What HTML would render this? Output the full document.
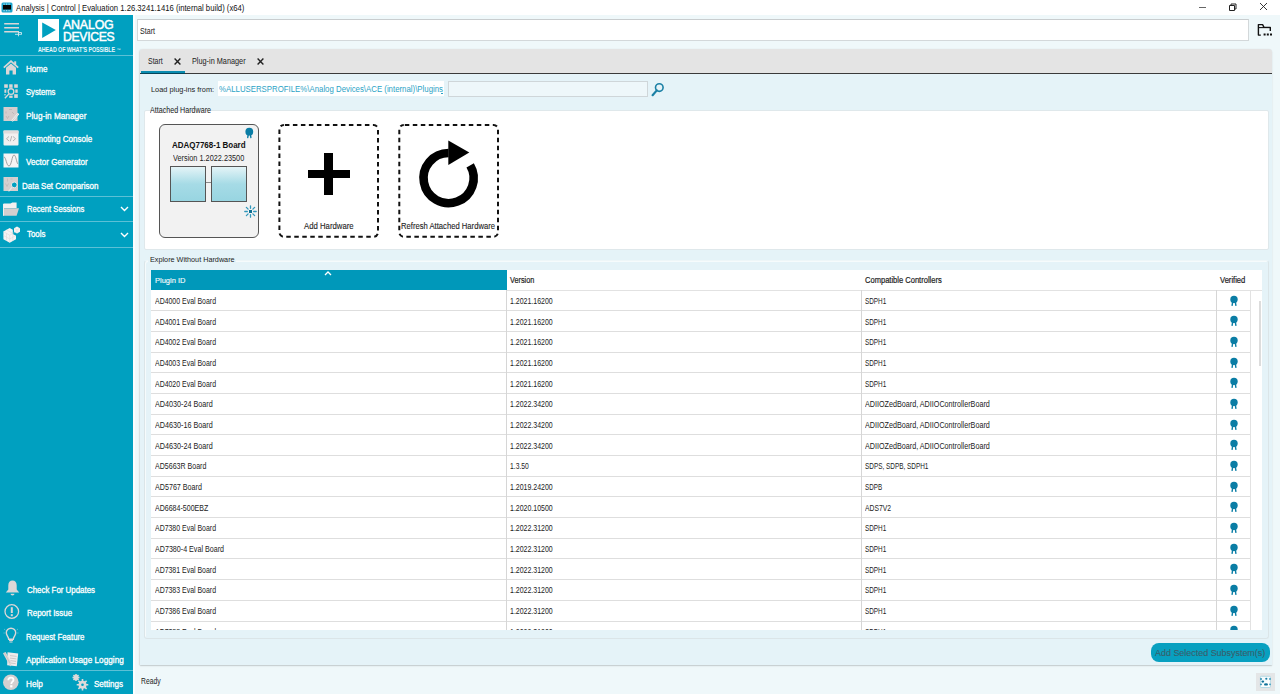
<!DOCTYPE html>
<html><head><meta charset="utf-8"><title>Analysis | Control | Evaluation</title>
<style>
html,body{margin:0;padding:0;width:1280px;height:694px;overflow:hidden;background:#fff}
body{position:relative;font-family:"Liberation Sans",sans-serif}
.b{position:absolute}
.t{position:absolute;white-space:nowrap;font-family:"Liberation Sans",sans-serif;transform-origin:0 50%}
</style></head><body>
<div class="b" style="left:0px;top:0px;width:1280px;height:15px;background:#fff"></div>
<svg class="b" style="left:1px;top:2px" width="12" height="11" viewBox="0 0 12 11">
<rect x="0.5" y="0.5" width="11" height="10" rx="1.5" fill="#1ea3cb"/>
<rect x="2" y="3" width="8" height="4.5" fill="#050505"/>
<rect x="2.5" y="1.6" width="1.2" height="1" fill="#bfe6f2"/><rect x="5" y="1.6" width="1.2" height="1" fill="#bfe6f2"/><rect x="7.5" y="1.6" width="1.2" height="1" fill="#bfe6f2"/>
<rect x="2.5" y="8.2" width="1.2" height="1" fill="#bfe6f2"/><rect x="5" y="8.2" width="1.2" height="1" fill="#bfe6f2"/><rect x="7.5" y="8.2" width="1.2" height="1" fill="#bfe6f2"/>
</svg>
<div class="t" style="left:16px;top:3px;font-size:9px;line-height:10px;font-weight:400;color:#111;letter-spacing:0px;transform:scaleX(0.8560);">Analysis | Control | Evaluation 1.26.3241.1416 (internal build) (x64)</div>
<div class="b" style="left:1199px;top:6.5px;width:7px;height:1px;background:#666"></div>
<svg class="b" style="left:1228px;top:2px" width="10" height="10" viewBox="0 0 10 10">
<path d="M1.5 3.5h5v5h-5z" fill="none" stroke="#222" stroke-width="1"/>
<path d="M3 3.5V2h5v5H6.5" fill="none" stroke="#222" stroke-width="1"/></svg>
<svg class="b" style="left:1259px;top:2px" width="9" height="9" viewBox="0 0 9 9">
<path d="M1 1L8 8M8 1L1 8" stroke="#222" stroke-width="0.9"/></svg>
<div class="b" style="left:133px;top:15px;width:1147px;height:679px;background:#eff8fa"></div>
<div class="b" style="left:133px;top:15px;width:2px;height:679px;background:#fbfdfe"></div>
<div class="b" style="left:0px;top:15px;width:133px;height:679px;background:#00a0c0"></div>
<div class="b" style="left:0px;top:55px;width:133px;height:1px;background:#5cc0d6"></div>
<div class="b" style="left:0px;top:196px;width:133px;height:1px;background:#5cc0d6"></div>
<div class="b" style="left:0px;top:221px;width:133px;height:1px;background:#5cc0d6"></div>
<div class="b" style="left:0px;top:247px;width:133px;height:1px;background:#5cc0d6"></div>
<div class="b" style="left:0px;top:670px;width:133px;height:1px;background:#5cc0d6"></div>
<svg class="b" style="left:3px;top:21px" width="20" height="16" viewBox="0 0 20 16">
<path d="M1.2 2.7h14.8M1.2 6.7h14.8M1.2 10.7h14.8" stroke="#dcd7d7" stroke-width="1.5"/>
<path d="M12 13.3h6.5M15.5 10.8v4.5M16 11.5h2.5v2" stroke="#cfe9ef" stroke-width="0.9" fill="none"/></svg>
<div class="b" style="left:38px;top:19px;width:21px;height:22px;background:#fff"></div>
<svg class="b" style="left:38px;top:19px" width="21" height="22" viewBox="0 0 21 22"><path d="M4.2 3.4L17.8 11L4.2 19z" fill="#00a0c0"/></svg>
<div class="t" style="left:63.3px;top:18px;font-size:12.4px;line-height:14px;font-weight:400;color:#fff;letter-spacing:-0.2px;-webkit-text-stroke:0.45px #fff;transform:scaleX(1.0029);">ANALOG</div>
<div class="t" style="left:63.3px;top:30px;font-size:12.4px;line-height:14px;font-weight:400;color:#fff;letter-spacing:-0.3px;-webkit-text-stroke:0.45px #fff;transform:scaleX(0.9829);">DEVICES</div>
<div class="t" style="left:37.8px;top:46px;font-size:6.8px;line-height:7px;font-weight:700;color:#e9f6fa;letter-spacing:-0.1px;transform:scaleX(0.7894);">AHEAD OF WHAT&#8217;S POSSIBLE</div>
<div class="t" style="left:116.5px;top:46.5px;font-size:4px;line-height:5px;font-weight:400;color:#e9f6fa;letter-spacing:0px;">&#8482;</div>
<div class="t" style="left:25.6px;top:64px;font-size:8.5px;line-height:10px;font-weight:400;color:#fff;letter-spacing:0px;-webkit-text-stroke:0.3px #fff;transform:scaleX(0.9521);">Home</div>
<div class="t" style="left:25.6px;top:87px;font-size:8.5px;line-height:10px;font-weight:400;color:#fff;letter-spacing:0px;-webkit-text-stroke:0.3px #fff;transform:scaleX(0.9020);">Systems</div>
<div class="t" style="left:25.6px;top:111px;font-size:8.5px;line-height:10px;font-weight:400;color:#fff;letter-spacing:0px;-webkit-text-stroke:0.3px #fff;transform:scaleX(0.9683);">Plug-in Manager</div>
<div class="t" style="left:25.6px;top:134px;font-size:8.5px;line-height:10px;font-weight:400;color:#fff;letter-spacing:0px;-webkit-text-stroke:0.3px #fff;transform:scaleX(0.9480);">Remoting Console</div>
<div class="t" style="left:25.6px;top:157px;font-size:8.5px;line-height:10px;font-weight:400;color:#fff;letter-spacing:0px;-webkit-text-stroke:0.3px #fff;transform:scaleX(0.9531);">Vector Generator</div>
<div class="t" style="left:22.3px;top:181px;font-size:8.5px;line-height:10px;font-weight:400;color:#fff;letter-spacing:0px;-webkit-text-stroke:0.3px #fff;transform:scaleX(0.9401);">Data Set Comparison</div>
<div class="t" style="left:26.7px;top:204px;font-size:8.5px;line-height:10px;font-weight:400;color:#fff;letter-spacing:0px;-webkit-text-stroke:0.3px #fff;transform:scaleX(0.8982);">Recent Sessions</div>
<div class="t" style="left:27px;top:229px;font-size:8.5px;line-height:10px;font-weight:400;color:#fff;letter-spacing:0px;-webkit-text-stroke:0.3px #fff;transform:scaleX(0.9323);">Tools</div>
<svg class="b" style="left:120px;top:206px" width="9" height="6" viewBox="0 0 9 6"><path d="M1 1L4.5 4.5L8 1" stroke="#fff" stroke-width="1.4" fill="none"/></svg>
<svg class="b" style="left:120px;top:231.5px" width="9" height="6" viewBox="0 0 9 6"><path d="M1 1L4.5 4.5L8 1" stroke="#fff" stroke-width="1.4" fill="none"/></svg>
<div class="t" style="left:27.2px;top:585px;font-size:8.5px;line-height:10px;font-weight:400;color:#fff;letter-spacing:0px;-webkit-text-stroke:0.3px #fff;transform:scaleX(0.9285);">Check For Updates</div>
<div class="t" style="left:27.2px;top:608px;font-size:8.5px;line-height:10px;font-weight:400;color:#fff;letter-spacing:0px;-webkit-text-stroke:0.3px #fff;transform:scaleX(0.9377);">Report Issue</div>
<div class="t" style="left:25.6px;top:632px;font-size:8.5px;line-height:10px;font-weight:400;color:#fff;letter-spacing:0px;-webkit-text-stroke:0.3px #fff;transform:scaleX(0.9238);">Request Feature</div>
<div class="t" style="left:25.6px;top:655px;font-size:8.5px;line-height:10px;font-weight:400;color:#fff;letter-spacing:0px;-webkit-text-stroke:0.3px #fff;transform:scaleX(0.9670);">Application Usage Logging</div>
<div class="t" style="left:25.6px;top:679px;font-size:8.5px;line-height:10px;font-weight:400;color:#fff;letter-spacing:0px;-webkit-text-stroke:0.3px #fff;transform:scaleX(0.9609);">Help</div>
<div class="t" style="left:94.3px;top:679px;font-size:8.5px;line-height:10px;font-weight:400;color:#fff;letter-spacing:0px;-webkit-text-stroke:0.3px #fff;transform:scaleX(0.9473);">Settings</div>
<svg class="b" style="left:3px;top:60px" width="16" height="15" viewBox="0 0 16 15">
<path d="M0.8 7.6L8 1.2L15.2 7.6" stroke="#dcd7d7" stroke-width="1.8" fill="none"/>
<rect x="11.2" y="1.3" width="2" height="3.5" fill="#dcd7d7"/>
<path d="M3 7.8L8 3.4L13 7.8V14.6H9.6V10.6H6.4V14.6H3z" fill="#dcd7d7"/></svg>
<svg class="b" style="left:0px;top:80px" width="24" height="24" viewBox="0 80 24 24">
<g fill="#dcd7d7"><rect x="4.2" y="84.3" width="3.6" height="3.5"/><rect x="9.2" y="84.3" width="3.4" height="3.5"/><rect x="14.2" y="84.3" width="3.6" height="3.5"/>
<rect x="4.4" y="89.4" width="1.9" height="3.4"/><rect x="15.3" y="89.4" width="2.4" height="3.4"/>
<rect x="9.2" y="95.6" width="3.4" height="2.3"/><rect x="14.2" y="94.2" width="3.6" height="3.7"/><rect x="4.4" y="94" width="1.2" height="1.4"/></g>
<circle cx="11" cy="91.6" r="2.85" stroke="#dcd7d7" stroke-width="1.3" fill="#00a0c0"/>
<path d="M8.9 93.9L4.9 98.3" stroke="#dcd7d7" stroke-width="1.4"/></svg>
<svg class="b" style="left:3px;top:107px" width="16" height="15" viewBox="0 0 16 15">
<rect x="0.5" y="0" width="14" height="14" fill="#d6cdcd"/>
<path d="M3 9l1.5 2.5 1.5-2.5M6 2.5h3M3 4.5v2M9 5l2 2" stroke="#b9b0b0" stroke-width="0.7" fill="none"/>
<path d="M15.5 6.5L9 14.2" stroke="#f4f4f4" stroke-width="2"/><path d="M15.5 6.5L9 14.2" stroke="#aaa" stroke-width="0.5"/></svg>
<svg class="b" style="left:3px;top:130px" width="16" height="16" viewBox="0 0 16 16">
<rect x="0.5" y="0.5" width="15" height="15" rx="1" fill="#f2f0f0"/>
<rect x="0.5" y="0.5" width="15" height="3" fill="#e0dcdc"/>
<path d="M6 6.5L3.5 8.7L6 11M10 6.5L12.5 8.7L10 11M8.8 6L7.2 11.4" stroke="#9a9a9a" stroke-width="0.7" fill="none"/></svg>
<svg class="b" style="left:3px;top:153px" width="16" height="15" viewBox="0 0 16 15">
<rect x="0.5" y="0.5" width="15" height="14" fill="#f6f4f4"/>
<path d="M1 4C3 4 3.5 13 6 13S9 2 11 2S13.5 10 15 11" stroke="#8a8a8a" stroke-width="0.8" fill="none"/></svg>
<svg class="b" style="left:0px;top:174px" width="24" height="20" viewBox="0 174 24 20">
<rect x="3.5" y="177" width="14.5" height="14" fill="#d6cfcf"/>
<path d="M5.5 183.5l1.5 3 1.5-3M7.5 178.5v3M10.5 179h2" stroke="#bdb6b6" stroke-width="0.7" fill="none"/>
<circle cx="14.3" cy="184.9" r="2.9" stroke="#ece8e8" stroke-width="1" fill="#00a0c0"/>
<path d="M12.2 187L8.6 191.4" stroke="#ece8e8" stroke-width="1.1"/></svg>
<svg class="b" style="left:0px;top:200px" width="24" height="18" viewBox="0 200 24 18">
<path d="M3.5 203.5H10.5L12.3 202.4H16.6V208H3.5z" fill="#f3f0f0"/>
<path d="M3.5 215.8V208.2H19L16.6 215.8z" fill="#d3cfcf"/>
<path d="M3.5 204V215.8" stroke="#f0eded" stroke-width="1"/></svg>
<svg class="b" style="left:0px;top:224px" width="24" height="22" viewBox="0 224 24 22">
<path d="M9.7 228L12.8 229.8V234L16 235.8V239.2L9.7 242.8L3.4 239.2V231.6z" fill="#f6f4f4"/>
<path d="M3.4 231.6L9.7 235.2L16 231.6M9.7 235.2V242.8M3.4 235.4L9.7 239L16 235.4M6.5 229.8L12.8 233.4M6.5 233.4V241M12.8 233.4V241" stroke="#d8d2d2" stroke-width="0.45" fill="none"/>
<path d="M17 226.5L20 228.2V231.7L17 233.4L14 231.7V228.2z" fill="#f6f4f4"/>
<path d="M14 228.2L17 229.9L20 228.2M17 229.9V233.4" stroke="#d8d2d2" stroke-width="0.45" fill="none"/></svg>
<svg class="b" style="left:5px;top:580px" width="15" height="16" viewBox="0 0 15 16">
<path d="M7.5 0.5C5 0.5 3.3 2.6 3.3 5.2V9.6L0.8 12.5H14.2L11.7 9.6V5.2C11.7 2.6 10 0.5 7.5 0.5z" fill="#dcd7d7"/>
<path d="M5.5 13.8A2 1.8 0 0 0 9.5 13.8z" fill="#dcd7d7"/></svg>
<svg class="b" style="left:4px;top:604px" width="16" height="16" viewBox="0 0 16 16">
<circle cx="7.8" cy="7.5" r="6.8" stroke="#dcd7d7" stroke-width="1.3" fill="none"/>
<rect x="6.8" y="3.2" width="2" height="5.8" fill="#dcd7d7"/><rect x="6.8" y="10.2" width="2" height="2" fill="#dcd7d7"/></svg>
<svg class="b" style="left:3px;top:627px" width="16" height="16" viewBox="0 0 16 16">
<path d="M8 1.2C5.3 1.2 3.3 3.2 3.3 5.8C3.3 8.4 5.5 9.5 5.7 12.2H10.3C10.5 9.5 12.7 8.4 12.7 5.8C12.7 3.2 10.7 1.2 8 1.2z" stroke="#dcd7d7" stroke-width="1.4" fill="none"/>
<path d="M6 13.5H10M6.5 15H9.5" stroke="#dcd7d7" stroke-width="1"/>
<path d="M1 2L2.3 3M15 2L13.7 3M0.5 6H1.8M15.5 6H14.2" stroke="#8fd0de" stroke-width="0.6"/></svg>
<svg class="b" style="left:3px;top:651px" width="16" height="16" viewBox="0 0 16 16">
<path d="M4.5 1.2L15.2 2.6L13.8 15.3L4.2 14.2z" fill="#eeebeb"/>
<path d="M7 4.6L13.6 5.4M7 7.1L13.3 7.9M7.5 9.6L13 10.4M8 12.1L12.7 12.7" stroke="#b5b0b0" stroke-width="0.6"/>
<path d="M1.3 1.6L7.2 12.6" stroke="#dcd7d7" stroke-width="3"/><path d="M1.3 1.6L7.2 12.6" stroke="#b9b3b3" stroke-width="0.5"/>
<path d="M5.8 13.3L7.6 15.6L8.3 12.4z" fill="#dcd7d7"/></svg>
<svg class="b" style="left:3px;top:674px" width="16" height="17" viewBox="0 0 16 17">
<circle cx="7.8" cy="8.3" r="7.8" fill="#d5d0d0"/>
<path d="M5.3 6.2C5.3 4.6 6.4 3.6 7.9 3.6C9.4 3.6 10.5 4.6 10.5 5.9C10.5 7.6 8.3 7.9 8.3 9.9" stroke="#fff" stroke-width="1.8" fill="none"/>
<rect x="7.2" y="11.2" width="2.2" height="2.2" fill="#fff"/></svg>
<svg class="b" style="left:72px;top:674px" width="17" height="17" viewBox="0 0 17 17">
<g fill="#dedada"><circle cx="10.5" cy="10.8" r="4"/><circle cx="4" cy="3.5" r="2.5"/></g>
<g stroke="#dedada" stroke-width="1.6">
<path d="M10.5 5v11.6M4.7 10.8h11.6M6.4 6.7l8.2 8.2M14.6 6.7l-8.2 8.2"/>
<path d="M4 0v7M0.5 3.5h7M1.5 1l5 5M6.5 1l-5 5"/></g>
<circle cx="10.5" cy="10.8" r="1.3" fill="#00a0c0"/></svg>
<div class="b" style="left:137px;top:19px;width:1112px;height:22px;background:#fff;border:1px solid #d3d8da;border-top-color:#c9cdcf;box-sizing:border-box"></div>
<div class="t" style="left:140px;top:26px;font-size:8.5px;line-height:10px;font-weight:400;color:#222;letter-spacing:0px;transform:scaleX(0.8355);">Start</div>
<svg class="b" style="left:1252px;top:20px" width="26" height="20" viewBox="1252 20 26 20">
<path d="M1260.8 35.1H1258.4V24.6H1262.6L1264 27.4H1270.3V31" stroke="#111" stroke-width="1.4" fill="none" stroke-linejoin="round"/>
<path d="M1258.4 27.6H1270.3" stroke="#111" stroke-width="1.1"/>
<rect x="1263.6" y="33.5" width="2" height="2" fill="#111"/><rect x="1266.8" y="33.5" width="2" height="2" fill="#111"/><rect x="1270" y="33.5" width="2" height="2" fill="#111"/></svg>
<div class="b" style="left:140px;top:49px;width:1132px;height:616px;background:#e5f3f8;box-shadow:0 1px 1.5px rgba(0,0,0,0.18), -1px 0 1.5px rgba(0,0,0,0.08);border-radius:3px 3px 0 0"></div>
<div class="b" style="left:140px;top:49px;width:1132px;height:24px;background:#e4e4e4;border-radius:3px 3px 0 0"></div>
<div class="b" style="left:140px;top:73px;width:1132px;height:1px;background:#3a3a3a"></div>
<div class="b" style="left:141px;top:71px;width:44px;height:2px;background:#0a8cb0"></div>
<div class="b" style="left:141px;top:73px;width:44px;height:1px;background:#06465a"></div>
<div class="t" style="left:147.5px;top:56px;font-size:8.5px;line-height:10px;font-weight:400;color:#222;letter-spacing:0px;transform:scaleX(0.8216);">Start</div>
<div class="t" style="left:192px;top:56px;font-size:8.5px;line-height:10px;font-weight:400;color:#222;letter-spacing:0px;transform:scaleX(0.8593);">Plug-in Manager</div>
<svg class="b" style="left:173.5px;top:58px" width="7" height="7" viewBox="0 0 7 7"><path d="M0.6 0.6L6.4 6.4M6.4 0.6L0.6 6.4" stroke="#222" stroke-width="1.4"/></svg>
<svg class="b" style="left:257px;top:58px" width="7" height="7" viewBox="0 0 7 7"><path d="M0.6 0.6L6.4 6.4M6.4 0.6L0.6 6.4" stroke="#222" stroke-width="1.4"/></svg>
<div class="t" style="left:150.6px;top:85px;font-size:8.1px;line-height:9px;font-weight:400;color:#222;letter-spacing:0px;transform:scaleX(0.9106);">Load plug-ins from:</div>
<div class="b" style="left:218px;top:81px;width:225.5px;height:15px;background:#fff"></div>
<div class="t" style="left:219.3px;top:83px;font-size:9.6px;line-height:11px;font-weight:400;color:#2ba3c6;letter-spacing:0px;transform:scaleX(0.8157);">%ALLUSERSPROFILE%\Analog Devices\ACE (internal)\Plugins</div>
<div class="b" style="left:441px;top:93px;width:2px;height:1px;background:#2ba3c6"></div>
<div class="b" style="left:448px;top:81px;width:200px;height:16px;background:#eef7fa;border:1px solid #cfd6d9;box-sizing:border-box"></div>
<svg class="b" style="left:651px;top:82px" width="14" height="15" viewBox="0 0 14 15">
<circle cx="8.3" cy="5.6" r="3.8" stroke="#1b80a5" stroke-width="1.6" fill="none"/>
<path d="M5.8 8.4L1.6 13.2" stroke="#1b80a5" stroke-width="2.2" stroke-linecap="round"/></svg>
<div class="b" style="left:144px;top:110px;width:1125px;height:139.5px;background:#fff;border:1px solid #dfe8eb;border-radius:2px;box-sizing:border-box"></div>
<div class="t" style="left:150px;top:105px;font-size:8.5px;line-height:10px;font-weight:400;color:#222;letter-spacing:0px;transform:scaleX(0.8383);">Attached Hardware</div>
<div class="b" style="left:158.5px;top:124px;width:100.5px;height:114px;background:#f2f2f2;border:1.5px solid #555;border-radius:6px;box-sizing:border-box"></div>
<svg class="b" style="left:244px;top:126px" width="11" height="13" viewBox="0 0 11 13">
<path d="M4.3 8.6L3.7 11.5M6.3 8.6L6.9 11.5" stroke="#0a7da5" stroke-width="1.4" stroke-linecap="round"/>
<circle cx="5.3" cy="5.7" r="3.9" fill="#0a7da5"/></svg>
<div class="t" style="left:172px;top:140px;font-size:8.5px;line-height:10px;font-weight:700;color:#111;letter-spacing:0px;transform:scaleX(0.9385);">ADAQ7768-1 Board</div>
<div class="t" style="left:172.5px;top:153px;font-size:8.5px;line-height:10px;font-weight:400;color:#222;letter-spacing:0px;transform:scaleX(0.8614);">Version 1.2022.23500</div>
<div class="b" style="left:170px;top:166px;width:36px;height:36px;background:linear-gradient(#e4f4f7,#a6dbe6 50%,#98d5e1);border:1px solid #555;box-sizing:border-box"></div>
<div class="b" style="left:211px;top:166px;width:36px;height:36px;background:linear-gradient(#e4f4f7,#a6dbe6 50%,#98d5e1);border:1px solid #555;box-sizing:border-box"></div>
<div class="b" style="left:206px;top:181.5px;width:5px;height:1.5px;background:#8a8a8a"></div>
<svg class="b" style="left:244px;top:205px" width="13" height="13" viewBox="0 0 13 13">
<g stroke="#2f97bb" stroke-width="1.3" stroke-linecap="round">
<path d="M6.5 0.8V3.3M6.5 9.7V12.2M0.8 6.5H3.3M9.7 6.5H12.2M2.4 2.4L4.1 4.1M8.9 8.9L10.6 10.6M10.6 2.4L8.9 4.1M4.1 8.9L2.4 10.6"/></g>
<rect x="5" y="5" width="3" height="3" fill="#0d6f93"/></svg>
<svg class="b" style="left:270px;top:115px" width="240" height="130" viewBox="270 115 240 130">
<rect x="279.4" y="124.9" width="98.6" height="111.9" rx="4.5" fill="none" stroke="#111" stroke-width="2" stroke-dasharray="4.5 3.5" stroke-dashoffset="-1"/>
<rect x="399.3" y="124.9" width="98.7" height="111.9" rx="4.5" fill="none" stroke="#111" stroke-width="2" stroke-dasharray="4.5 3.5" stroke-dashoffset="-1"/>
</svg>
<div class="b" style="left:307.5px;top:169.5px;width:42.2px;height:8.3px;background:#000"></div>
<div class="b" style="left:324.4px;top:152.5px;width:8.4px;height:42.2px;background:#000"></div>
<div class="t" style="left:303.7px;top:221px;font-size:8.5px;line-height:10px;font-weight:400;color:#222;letter-spacing:0px;-webkit-text-stroke:0.1px #222;transform:scaleX(0.9127);">Add Hardware</div>
<div class="t" style="left:401px;top:221px;font-size:8.5px;line-height:10px;font-weight:400;color:#222;letter-spacing:0px;-webkit-text-stroke:0.1px #222;transform:scaleX(0.9002);">Refresh Attached Hardware</div>
<svg class="b" style="left:415px;top:138px" width="70" height="74" viewBox="415 138 70 74">
<path d="M448.6 153.05A25.05 25.05 0 1 0 470.17 165.35" stroke="#000" stroke-width="8.6" fill="none"/>
<path d="M448.3 140.6L469.3 152.6L448.3 164.9z" fill="#000"/></svg>
<div class="b" style="left:144px;top:260px;width:1125px;height:378.5px;border:1px solid #dbe5e8;border-top-color:#eef6f8;border-radius:3px;box-shadow:inset 1px 1px 0 #f6fbfc;box-sizing:border-box"></div>
<div class="b" style="left:148px;top:255px;width:88px;height:10px;background:#e5f3f8"></div>
<div class="t" style="left:149.75px;top:255px;font-size:8.1px;line-height:9px;font-weight:400;color:#222;letter-spacing:0px;transform:scaleX(0.8955);">Explore Without Hardware</div>
<div class="b" style="left:151px;top:270px;width:1111px;height:360px;background:#fff;overflow:hidden"></div>
<div class="b" style="left:151px;top:270px;width:355.5px;height:20px;background:#0098ba"></div>
<div class="b" style="left:506px;top:290px;width:756px;height:1px;background:#e2e2e2"></div>
<div class="t" style="left:154.75px;top:276px;font-size:8.1px;line-height:9px;font-weight:400;color:#f4fbfd;letter-spacing:0px;-webkit-text-stroke:0.15px #f4fbfd;transform:scaleX(0.9286);">Plugin ID</div>
<svg class="b" style="left:324px;top:271px" width="8" height="5" viewBox="0 0 8 5"><path d="M1 4L4 1L7 4" stroke="#fff" stroke-width="1.3" fill="none"/></svg>
<div class="t" style="left:510px;top:275px;font-size:8.5px;line-height:10px;font-weight:400;color:#222;letter-spacing:0px;-webkit-text-stroke:0.2px #222;transform:scaleX(0.8551);">Version</div>
<div class="t" style="left:864.75px;top:275px;font-size:8.5px;line-height:10px;font-weight:400;color:#222;letter-spacing:0px;-webkit-text-stroke:0.2px #222;transform:scaleX(0.8878);">Compatible Controllers</div>
<div class="t" style="left:1220px;top:275px;font-size:8.5px;line-height:10px;font-weight:400;color:#222;letter-spacing:0px;-webkit-text-stroke:0.2px #222;transform:scaleX(0.8921);">Verified</div>
<div class="b" style="left:151px;top:270px;width:1111px;height:360px;overflow:hidden"><div class="t" style="left:3.75px;top:26px;font-size:8.5px;line-height:10px;font-weight:400;color:#222;letter-spacing:0px;transform:scaleX(0.8169);">AD4000 Eval Board</div><div class="t" style="left:359px;top:26px;font-size:8.5px;line-height:10px;font-weight:400;color:#222;letter-spacing:0px;transform:scaleX(0.8221);">1.2021.16200</div><div class="t" style="left:713.75px;top:26px;font-size:8.5px;line-height:10px;font-weight:400;color:#222;letter-spacing:0px;transform:scaleX(0.7497);">SDPH1</div><svg class="b" style="left:1078px;top:24.50px" width="10" height="12" viewBox="0 0 10 12">
<path d="M3.7 7L3.1 10.3M6.3 7L6.9 10.3" stroke="#0a7da5" stroke-width="1.4" stroke-linecap="round"/>
<circle cx="5" cy="4.4" r="3.7" fill="#0a7da5"/></svg><div class="b" style="left:0px;top:40px;width:1100px;height:1px;background:#dedede"></div><div class="t" style="left:3.75px;top:47px;font-size:8.5px;line-height:10px;font-weight:400;color:#222;letter-spacing:0px;transform:scaleX(0.8169);">AD4001 Eval Board</div><div class="t" style="left:359px;top:47px;font-size:8.5px;line-height:10px;font-weight:400;color:#222;letter-spacing:0px;transform:scaleX(0.8221);">1.2021.16200</div><div class="t" style="left:713.75px;top:47px;font-size:8.5px;line-height:10px;font-weight:400;color:#222;letter-spacing:0px;transform:scaleX(0.7497);">SDPH1</div><svg class="b" style="left:1078px;top:45.18px" width="10" height="12" viewBox="0 0 10 12">
<path d="M3.7 7L3.1 10.3M6.3 7L6.9 10.3" stroke="#0a7da5" stroke-width="1.4" stroke-linecap="round"/>
<circle cx="5" cy="4.4" r="3.7" fill="#0a7da5"/></svg><div class="b" style="left:0px;top:61px;width:1100px;height:1px;background:#dedede"></div><div class="t" style="left:3.75px;top:67px;font-size:8.5px;line-height:10px;font-weight:400;color:#222;letter-spacing:0px;transform:scaleX(0.8169);">AD4002 Eval Board</div><div class="t" style="left:359px;top:67px;font-size:8.5px;line-height:10px;font-weight:400;color:#222;letter-spacing:0px;transform:scaleX(0.8221);">1.2021.16200</div><div class="t" style="left:713.75px;top:67px;font-size:8.5px;line-height:10px;font-weight:400;color:#222;letter-spacing:0px;transform:scaleX(0.7497);">SDPH1</div><svg class="b" style="left:1078px;top:65.86px" width="10" height="12" viewBox="0 0 10 12">
<path d="M3.7 7L3.1 10.3M6.3 7L6.9 10.3" stroke="#0a7da5" stroke-width="1.4" stroke-linecap="round"/>
<circle cx="5" cy="4.4" r="3.7" fill="#0a7da5"/></svg><div class="b" style="left:0px;top:82px;width:1100px;height:1px;background:#dedede"></div><div class="t" style="left:3.75px;top:88px;font-size:8.5px;line-height:10px;font-weight:400;color:#222;letter-spacing:0px;transform:scaleX(0.8169);">AD4003 Eval Board</div><div class="t" style="left:359px;top:88px;font-size:8.5px;line-height:10px;font-weight:400;color:#222;letter-spacing:0px;transform:scaleX(0.8221);">1.2021.16200</div><div class="t" style="left:713.75px;top:88px;font-size:8.5px;line-height:10px;font-weight:400;color:#222;letter-spacing:0px;transform:scaleX(0.7497);">SDPH1</div><svg class="b" style="left:1078px;top:86.54px" width="10" height="12" viewBox="0 0 10 12">
<path d="M3.7 7L3.1 10.3M6.3 7L6.9 10.3" stroke="#0a7da5" stroke-width="1.4" stroke-linecap="round"/>
<circle cx="5" cy="4.4" r="3.7" fill="#0a7da5"/></svg><div class="b" style="left:0px;top:102px;width:1100px;height:1px;background:#dedede"></div><div class="t" style="left:3.75px;top:109px;font-size:8.5px;line-height:10px;font-weight:400;color:#222;letter-spacing:0px;transform:scaleX(0.8169);">AD4020 Eval Board</div><div class="t" style="left:359px;top:109px;font-size:8.5px;line-height:10px;font-weight:400;color:#222;letter-spacing:0px;transform:scaleX(0.8221);">1.2021.16200</div><div class="t" style="left:713.75px;top:109px;font-size:8.5px;line-height:10px;font-weight:400;color:#222;letter-spacing:0px;transform:scaleX(0.7497);">SDPH1</div><svg class="b" style="left:1078px;top:107.22px" width="10" height="12" viewBox="0 0 10 12">
<path d="M3.7 7L3.1 10.3M6.3 7L6.9 10.3" stroke="#0a7da5" stroke-width="1.4" stroke-linecap="round"/>
<circle cx="5" cy="4.4" r="3.7" fill="#0a7da5"/></svg><div class="b" style="left:0px;top:123px;width:1100px;height:1px;background:#dedede"></div><div class="t" style="left:3.75px;top:129px;font-size:8.5px;line-height:10px;font-weight:400;color:#222;letter-spacing:0px;transform:scaleX(0.8487);">AD4030-24 Board</div><div class="t" style="left:359px;top:129px;font-size:8.5px;line-height:10px;font-weight:400;color:#222;letter-spacing:0px;transform:scaleX(0.8221);">1.2022.34200</div><div class="t" style="left:713.75px;top:129px;font-size:8.5px;line-height:10px;font-weight:400;color:#222;letter-spacing:0px;transform:scaleX(0.8466);">ADIIOZedBoard, ADIIOControllerBoard</div><svg class="b" style="left:1078px;top:127.90px" width="10" height="12" viewBox="0 0 10 12">
<path d="M3.7 7L3.1 10.3M6.3 7L6.9 10.3" stroke="#0a7da5" stroke-width="1.4" stroke-linecap="round"/>
<circle cx="5" cy="4.4" r="3.7" fill="#0a7da5"/></svg><div class="b" style="left:0px;top:144px;width:1100px;height:1px;background:#dedede"></div><div class="t" style="left:3.75px;top:150px;font-size:8.5px;line-height:10px;font-weight:400;color:#222;letter-spacing:0px;transform:scaleX(0.8487);">AD4630-16 Board</div><div class="t" style="left:359px;top:150px;font-size:8.5px;line-height:10px;font-weight:400;color:#222;letter-spacing:0px;transform:scaleX(0.8221);">1.2022.34200</div><div class="t" style="left:713.75px;top:150px;font-size:8.5px;line-height:10px;font-weight:400;color:#222;letter-spacing:0px;transform:scaleX(0.8466);">ADIIOZedBoard, ADIIOControllerBoard</div><svg class="b" style="left:1078px;top:148.58px" width="10" height="12" viewBox="0 0 10 12">
<path d="M3.7 7L3.1 10.3M6.3 7L6.9 10.3" stroke="#0a7da5" stroke-width="1.4" stroke-linecap="round"/>
<circle cx="5" cy="4.4" r="3.7" fill="#0a7da5"/></svg><div class="b" style="left:0px;top:164px;width:1100px;height:1px;background:#dedede"></div><div class="t" style="left:3.75px;top:171px;font-size:8.5px;line-height:10px;font-weight:400;color:#222;letter-spacing:0px;transform:scaleX(0.8487);">AD4630-24 Board</div><div class="t" style="left:359px;top:171px;font-size:8.5px;line-height:10px;font-weight:400;color:#222;letter-spacing:0px;transform:scaleX(0.8221);">1.2022.34200</div><div class="t" style="left:713.75px;top:171px;font-size:8.5px;line-height:10px;font-weight:400;color:#222;letter-spacing:0px;transform:scaleX(0.8466);">ADIIOZedBoard, ADIIOControllerBoard</div><svg class="b" style="left:1078px;top:169.26px" width="10" height="12" viewBox="0 0 10 12">
<path d="M3.7 7L3.1 10.3M6.3 7L6.9 10.3" stroke="#0a7da5" stroke-width="1.4" stroke-linecap="round"/>
<circle cx="5" cy="4.4" r="3.7" fill="#0a7da5"/></svg><div class="b" style="left:0px;top:185px;width:1100px;height:1px;background:#dedede"></div><div class="t" style="left:3.75px;top:191px;font-size:8.5px;line-height:10px;font-weight:400;color:#222;letter-spacing:0px;transform:scaleX(0.8303);">AD5663R Board</div><div class="t" style="left:359px;top:191px;font-size:8.5px;line-height:10px;font-weight:400;color:#222;letter-spacing:0px;transform:scaleX(0.7952);">1.3.50</div><div class="t" style="left:713.75px;top:191px;font-size:8.5px;line-height:10px;font-weight:400;color:#222;letter-spacing:0px;transform:scaleX(0.7539);">SDPS, SDPB, SDPH1</div><svg class="b" style="left:1078px;top:189.94px" width="10" height="12" viewBox="0 0 10 12">
<path d="M3.7 7L3.1 10.3M6.3 7L6.9 10.3" stroke="#0a7da5" stroke-width="1.4" stroke-linecap="round"/>
<circle cx="5" cy="4.4" r="3.7" fill="#0a7da5"/></svg><div class="b" style="left:0px;top:206px;width:1100px;height:1px;background:#dedede"></div><div class="t" style="left:3.75px;top:212px;font-size:8.5px;line-height:10px;font-weight:400;color:#222;letter-spacing:0px;transform:scaleX(0.8410);">AD5767 Board</div><div class="t" style="left:359px;top:212px;font-size:8.5px;line-height:10px;font-weight:400;color:#222;letter-spacing:0px;transform:scaleX(0.8221);">1.2019.24200</div><div class="t" style="left:713.75px;top:212px;font-size:8.5px;line-height:10px;font-weight:400;color:#222;letter-spacing:0px;transform:scaleX(0.7385);">SDPB</div><svg class="b" style="left:1078px;top:210.62px" width="10" height="12" viewBox="0 0 10 12">
<path d="M3.7 7L3.1 10.3M6.3 7L6.9 10.3" stroke="#0a7da5" stroke-width="1.4" stroke-linecap="round"/>
<circle cx="5" cy="4.4" r="3.7" fill="#0a7da5"/></svg><div class="b" style="left:0px;top:226px;width:1100px;height:1px;background:#dedede"></div><div class="t" style="left:3.75px;top:233px;font-size:8.5px;line-height:10px;font-weight:400;color:#222;letter-spacing:0px;transform:scaleX(0.8286);">AD6684-500EBZ</div><div class="t" style="left:359px;top:233px;font-size:8.5px;line-height:10px;font-weight:400;color:#222;letter-spacing:0px;transform:scaleX(0.8221);">1.2020.10500</div><div class="t" style="left:713.75px;top:233px;font-size:8.5px;line-height:10px;font-weight:400;color:#222;letter-spacing:0px;transform:scaleX(0.7943);">ADS7V2</div><svg class="b" style="left:1078px;top:231.30px" width="10" height="12" viewBox="0 0 10 12">
<path d="M3.7 7L3.1 10.3M6.3 7L6.9 10.3" stroke="#0a7da5" stroke-width="1.4" stroke-linecap="round"/>
<circle cx="5" cy="4.4" r="3.7" fill="#0a7da5"/></svg><div class="b" style="left:0px;top:247px;width:1100px;height:1px;background:#dedede"></div><div class="t" style="left:3.75px;top:253px;font-size:8.5px;line-height:10px;font-weight:400;color:#222;letter-spacing:0px;transform:scaleX(0.8169);">AD7380 Eval Board</div><div class="t" style="left:359px;top:253px;font-size:8.5px;line-height:10px;font-weight:400;color:#222;letter-spacing:0px;transform:scaleX(0.8221);">1.2022.31200</div><div class="t" style="left:713.75px;top:253px;font-size:8.5px;line-height:10px;font-weight:400;color:#222;letter-spacing:0px;transform:scaleX(0.7497);">SDPH1</div><svg class="b" style="left:1078px;top:251.98px" width="10" height="12" viewBox="0 0 10 12">
<path d="M3.7 7L3.1 10.3M6.3 7L6.9 10.3" stroke="#0a7da5" stroke-width="1.4" stroke-linecap="round"/>
<circle cx="5" cy="4.4" r="3.7" fill="#0a7da5"/></svg><div class="b" style="left:0px;top:268px;width:1100px;height:1px;background:#dedede"></div><div class="t" style="left:3.75px;top:274px;font-size:8.5px;line-height:10px;font-weight:400;color:#222;letter-spacing:0px;transform:scaleX(0.8392);">AD7380-4 Eval Board</div><div class="t" style="left:359px;top:274px;font-size:8.5px;line-height:10px;font-weight:400;color:#222;letter-spacing:0px;transform:scaleX(0.8221);">1.2022.31200</div><div class="t" style="left:713.75px;top:274px;font-size:8.5px;line-height:10px;font-weight:400;color:#222;letter-spacing:0px;transform:scaleX(0.7497);">SDPH1</div><svg class="b" style="left:1078px;top:272.66px" width="10" height="12" viewBox="0 0 10 12">
<path d="M3.7 7L3.1 10.3M6.3 7L6.9 10.3" stroke="#0a7da5" stroke-width="1.4" stroke-linecap="round"/>
<circle cx="5" cy="4.4" r="3.7" fill="#0a7da5"/></svg><div class="b" style="left:0px;top:288px;width:1100px;height:1px;background:#dedede"></div><div class="t" style="left:3.75px;top:295px;font-size:8.5px;line-height:10px;font-weight:400;color:#222;letter-spacing:0px;transform:scaleX(0.8169);">AD7381 Eval Board</div><div class="t" style="left:359px;top:295px;font-size:8.5px;line-height:10px;font-weight:400;color:#222;letter-spacing:0px;transform:scaleX(0.8221);">1.2022.31200</div><div class="t" style="left:713.75px;top:295px;font-size:8.5px;line-height:10px;font-weight:400;color:#222;letter-spacing:0px;transform:scaleX(0.7497);">SDPH1</div><svg class="b" style="left:1078px;top:293.34px" width="10" height="12" viewBox="0 0 10 12">
<path d="M3.7 7L3.1 10.3M6.3 7L6.9 10.3" stroke="#0a7da5" stroke-width="1.4" stroke-linecap="round"/>
<circle cx="5" cy="4.4" r="3.7" fill="#0a7da5"/></svg><div class="b" style="left:0px;top:309px;width:1100px;height:1px;background:#dedede"></div><div class="t" style="left:3.75px;top:315px;font-size:8.5px;line-height:10px;font-weight:400;color:#222;letter-spacing:0px;transform:scaleX(0.8169);">AD7383 Eval Board</div><div class="t" style="left:359px;top:315px;font-size:8.5px;line-height:10px;font-weight:400;color:#222;letter-spacing:0px;transform:scaleX(0.8221);">1.2022.31200</div><div class="t" style="left:713.75px;top:315px;font-size:8.5px;line-height:10px;font-weight:400;color:#222;letter-spacing:0px;transform:scaleX(0.7497);">SDPH1</div><svg class="b" style="left:1078px;top:314.02px" width="10" height="12" viewBox="0 0 10 12">
<path d="M3.7 7L3.1 10.3M6.3 7L6.9 10.3" stroke="#0a7da5" stroke-width="1.4" stroke-linecap="round"/>
<circle cx="5" cy="4.4" r="3.7" fill="#0a7da5"/></svg><div class="b" style="left:0px;top:330px;width:1100px;height:1px;background:#dedede"></div><div class="t" style="left:3.75px;top:336px;font-size:8.5px;line-height:10px;font-weight:400;color:#222;letter-spacing:0px;transform:scaleX(0.8169);">AD7386 Eval Board</div><div class="t" style="left:359px;top:336px;font-size:8.5px;line-height:10px;font-weight:400;color:#222;letter-spacing:0px;transform:scaleX(0.8221);">1.2022.31200</div><div class="t" style="left:713.75px;top:336px;font-size:8.5px;line-height:10px;font-weight:400;color:#222;letter-spacing:0px;transform:scaleX(0.7497);">SDPH1</div><svg class="b" style="left:1078px;top:334.70px" width="10" height="12" viewBox="0 0 10 12">
<path d="M3.7 7L3.1 10.3M6.3 7L6.9 10.3" stroke="#0a7da5" stroke-width="1.4" stroke-linecap="round"/>
<circle cx="5" cy="4.4" r="3.7" fill="#0a7da5"/></svg><div class="b" style="left:0px;top:351px;width:1100px;height:1px;background:#dedede"></div><div class="t" style="left:3.75px;top:357px;font-size:8.5px;line-height:10px;font-weight:400;color:#222;letter-spacing:0px;transform:scaleX(0.8169);">AD7388 Eval Board</div><div class="t" style="left:359px;top:357px;font-size:8.5px;line-height:10px;font-weight:400;color:#222;letter-spacing:0px;transform:scaleX(0.8221);">1.2022.31200</div><div class="t" style="left:713.75px;top:357px;font-size:8.5px;line-height:10px;font-weight:400;color:#222;letter-spacing:0px;transform:scaleX(0.7497);">SDPH1</div><svg class="b" style="left:1078px;top:355.38px" width="10" height="12" viewBox="0 0 10 12">
<path d="M3.7 7L3.1 10.3M6.3 7L6.9 10.3" stroke="#0a7da5" stroke-width="1.4" stroke-linecap="round"/>
<circle cx="5" cy="4.4" r="3.7" fill="#0a7da5"/></svg><div class="b" style="left:355px;top:20px;width:1px;height:340px;background:#d6d6d6"></div><div class="b" style="left:710px;top:20px;width:1px;height:340px;background:#d6d6d6"></div><div class="b" style="left:1065px;top:20px;width:1px;height:340px;background:#d6d6d6"></div><div class="b" style="left:1099px;top:20px;width:1px;height:340px;background:#e2e2e2"></div><div class="b" style="left:1107.5px;top:30.8px;width:2.5px;height:65px;background:#dcdcdc"></div></div>
<div class="b" style="left:1150.5px;top:643px;width:119px;height:19px;background:#08a0c0;border-radius:8px"></div>
<div class="t" style="left:1155px;top:647px;font-size:9.6px;line-height:11px;font-weight:400;color:#3a5e6a;letter-spacing:0px;-webkit-text-stroke:0.1px #3a5e6a;transform:scaleX(0.9312);">Add Selected Subsystem(s)</div>
<div class="t" style="left:140.6px;top:676px;font-size:8.5px;line-height:10px;font-weight:400;color:#222;letter-spacing:0px;transform:scaleX(0.7975);">Ready</div>
<div class="b" style="left:1256px;top:673px;width:18.5px;height:18px;background:#e4e6e7"></div>
<svg class="b" style="left:1252px;top:668px" width="28" height="26" viewBox="1252 668 28 26">
<rect x="1260.4" y="676.3" width="10" height="11.2" rx="0.8" fill="#f4fbfd" stroke="#9fd0e0" stroke-width="0.7"/>
<path d="M1260.5 686.5L1269.5 679.5V686.5z" fill="#fff"/>
<ellipse cx="1261" cy="679" rx="1" ry="0.9" fill="#2f8fb2"/><ellipse cx="1266.3" cy="678.8" rx="1.1" ry="1" fill="#1a7ea5"/><ellipse cx="1270" cy="679" rx="0.9" ry="0.9" fill="#3a9bbd"/>
<ellipse cx="1262.8" cy="681.6" rx="1.4" ry="1.1" fill="#0f7199"/>
<ellipse cx="1261" cy="684.3" rx="0.9" ry="0.9" fill="#2f8fb2"/><ellipse cx="1266" cy="684.4" rx="2" ry="1.2" fill="#0f7199"/><ellipse cx="1270" cy="684.3" rx="0.9" ry="0.9" fill="#3a9bbd"/>
</svg>
</body></html>
